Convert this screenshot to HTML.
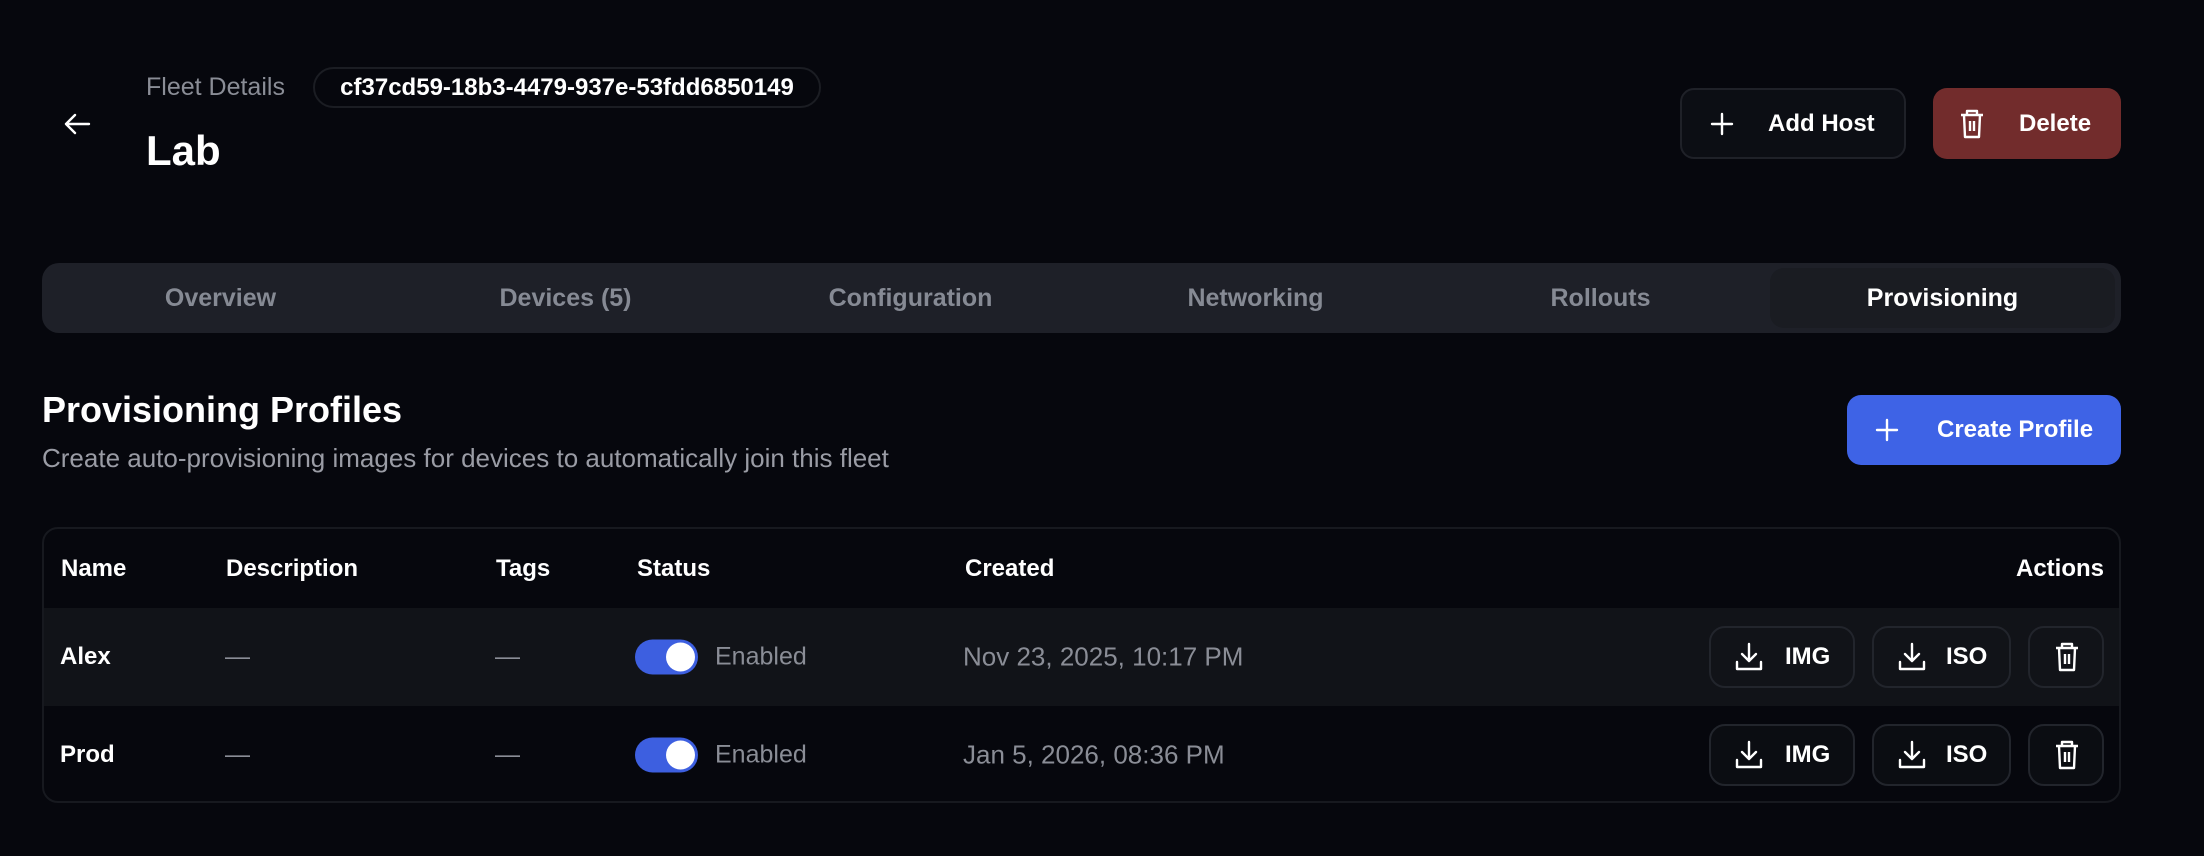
<!DOCTYPE html>
<html><head><meta charset="utf-8"><style>
*{box-sizing:border-box;margin:0;padding:0}
body{width:2204px;height:856px;background:#06070d;font-family:"Liberation Sans",sans-serif;color:#fff;position:relative;overflow:hidden}
.a{position:absolute}
.btn{position:absolute;display:flex;align-items:center;border-radius:14px;font-weight:700;font-size:24px}
.tab{position:absolute;top:0;height:70px;width:345px;display:flex;align-items:center;justify-content:center;font-size:25px;font-weight:600;color:#868a94}
.th{position:absolute;font-size:24px;font-weight:700;top:40px;transform:translateY(-50%)}
.td{position:absolute;font-size:25px;transform:translateY(-50%)}
.ab{position:absolute;height:62px;border:2px solid #22252c;border-radius:16px;display:flex;align-items:center;font-size:24px;font-weight:700}
.tg{position:absolute;width:63px;height:35px;border-radius:18px;background:#3d5fe0;transform:translateY(-50%)}
.tg:after{content:"";position:absolute;right:3px;top:3px;width:29px;height:29px;border-radius:50%;background:#fff}
</style></head><body>
<svg class="a" style="left:63px;top:112px" width="28" height="24" viewBox="0 0 28 24"><path d="M26 12H3M12 3L3 12l9 9" fill="none" stroke="#fff" stroke-width="2.4" stroke-linecap="round" stroke-linejoin="round"/></svg>
<div class="a" style="left:146px;top:73px;font-size:25px;color:#8a8d96">Fleet Details</div>
<div class="a" style="left:313px;top:67px;width:508px;height:41px;border:2px solid #1b1d23;border-radius:21px;font-size:24px;font-weight:700;display:flex;align-items:center;justify-content:center">cf37cd59-18b3-4479-937e-53fdd6850149</div>
<div class="a" style="left:146px;top:127px;font-size:42px;font-weight:700">Lab</div>
<div class="btn" style="left:1680px;top:88px;width:226px;height:71px;background:#0c0e14;border:2px solid #1f2128">
<svg style="position:absolute;left:28px" width="24" height="24" viewBox="0 0 24 24"><path d="M12 2v20M2 12h20" stroke="#fff" stroke-width="2.4" stroke-linecap="round"/></svg><span style="position:absolute;left:86px">Add Host</span></div>
<div class="btn" style="left:1933px;top:88px;width:188px;height:71px;background:#722c2c">
<svg style="position:absolute;left:26px" width="26" height="32" viewBox="0 0 26 32"><path d="M2 7h22M8 7V3h10v4M5 7l1 22h14l1-22M11 13v10M15 13v10" fill="none" stroke="#fff" stroke-width="2.4" stroke-linejoin="round"/></svg><span style="position:absolute;left:86px">Delete</span></div>
<div class="a" style="left:42px;top:263px;width:2079px;height:70px;background:#1e2028;border-radius:17px">
<div class="tab" style="left:6px">Overview</div><div class="tab" style="left:351px">Devices (5)</div><div class="tab" style="left:696px">Configuration</div><div class="tab" style="left:1041px">Networking</div><div class="tab" style="left:1386px">Rollouts</div>
<div class="tab" style="left:1728px;top:5px;height:60px;width:345px;background:#1a1c22;border-radius:14px;color:#fff">Provisioning</div></div>
<div class="a" style="left:42px;top:389px;font-size:36px;font-weight:700">Provisioning Profiles</div>
<div class="a" style="left:42px;top:443px;font-size:26px;color:#9a9ca5">Create auto-provisioning images for devices to automatically join this fleet</div>
<div class="btn" style="left:1847px;top:395px;width:274px;height:70px;background:#3e63e6">
<svg style="position:absolute;left:28px" width="24" height="24" viewBox="0 0 24 24"><path d="M12 2v20M2 12h20" stroke="#fff" stroke-width="2.4" stroke-linecap="round"/></svg><span style="position:absolute;left:90px">Create Profile</span></div>
<div class="a" style="left:42px;top:527px;width:2079px;height:276px;border:2px solid #17191f;border-radius:16px;overflow:hidden">
<div class="th" style="left:17px">Name</div><div class="th" style="left:182px">Description</div><div class="th" style="left:452px">Tags</div><div class="th" style="left:593px">Status</div><div class="th" style="left:921px">Created</div><div class="th" style="right:15px">Actions</div>
<div class="a" style="left:0;top:79px;width:100%;height:98px;background:#111318"></div>
</div>
<div class="td" style="left:60px;top:657px;font-weight:700;font-size:24px">Alex</div>
<div class="td" style="left:225px;top:657px;color:#8a8d96">—</div>
<div class="td" style="left:495px;top:657px;color:#8a8d96">—</div>
<div class="tg" style="left:635px;top:657px"></div>
<div class="td" style="left:715px;top:657px;color:#8a8d96">Enabled</div>
<div class="td" style="left:963px;top:657px;color:#8a8d96;font-size:26px">Nov 23, 2025, 10:17 PM</div>
<div class="td" style="left:60px;top:755px;font-weight:700;font-size:24px">Prod</div>
<div class="td" style="left:225px;top:755px;color:#8a8d96">—</div>
<div class="td" style="left:495px;top:755px;color:#8a8d96">—</div>
<div class="tg" style="left:635px;top:755px"></div>
<div class="td" style="left:715px;top:755px;color:#8a8d96">Enabled</div>
<div class="td" style="left:963px;top:755px;color:#8a8d96;font-size:26px">Jan 5, 2026, 08:36 PM</div>
<div class="ab" style="left:1709px;top:626px;width:146px;background:#111318"><svg style="position:absolute;left:24px" width="28" height="30" viewBox="0 0 28 30"><path d="M14 2v17M7 12l7 7 7-7M2 20v7h24v-7" fill="none" stroke="#fff" stroke-width="2.4" stroke-linecap="round" stroke-linejoin="round"/></svg><span style="position:absolute;left:74px">IMG</span></div>
<div class="ab" style="left:1872px;top:626px;width:139px;background:#111318"><svg style="position:absolute;left:24px" width="28" height="30" viewBox="0 0 28 30"><path d="M14 2v17M7 12l7 7 7-7M2 20v7h24v-7" fill="none" stroke="#fff" stroke-width="2.4" stroke-linecap="round" stroke-linejoin="round"/></svg><span style="position:absolute;left:72px">ISO</span></div>
<div class="ab" style="left:2028px;top:626px;width:76px;background:#111318"><svg style="position:absolute;left:24px" width="26" height="32" viewBox="0 0 26 32"><path d="M2 7h22M8 7V3h10v4M5 7l1 22h14l1-22M11 13v10M15 13v10" fill="none" stroke="#fff" stroke-width="2.4" stroke-linejoin="round"/></svg></div>
<div class="ab" style="left:1709px;top:724px;width:146px;background:#0b0d12"><svg style="position:absolute;left:24px" width="28" height="30" viewBox="0 0 28 30"><path d="M14 2v17M7 12l7 7 7-7M2 20v7h24v-7" fill="none" stroke="#fff" stroke-width="2.4" stroke-linecap="round" stroke-linejoin="round"/></svg><span style="position:absolute;left:74px">IMG</span></div>
<div class="ab" style="left:1872px;top:724px;width:139px;background:#0b0d12"><svg style="position:absolute;left:24px" width="28" height="30" viewBox="0 0 28 30"><path d="M14 2v17M7 12l7 7 7-7M2 20v7h24v-7" fill="none" stroke="#fff" stroke-width="2.4" stroke-linecap="round" stroke-linejoin="round"/></svg><span style="position:absolute;left:72px">ISO</span></div>
<div class="ab" style="left:2028px;top:724px;width:76px;background:#0b0d12"><svg style="position:absolute;left:24px" width="26" height="32" viewBox="0 0 26 32"><path d="M2 7h22M8 7V3h10v4M5 7l1 22h14l1-22M11 13v10M15 13v10" fill="none" stroke="#fff" stroke-width="2.4" stroke-linejoin="round"/></svg></div>
</body></html>
